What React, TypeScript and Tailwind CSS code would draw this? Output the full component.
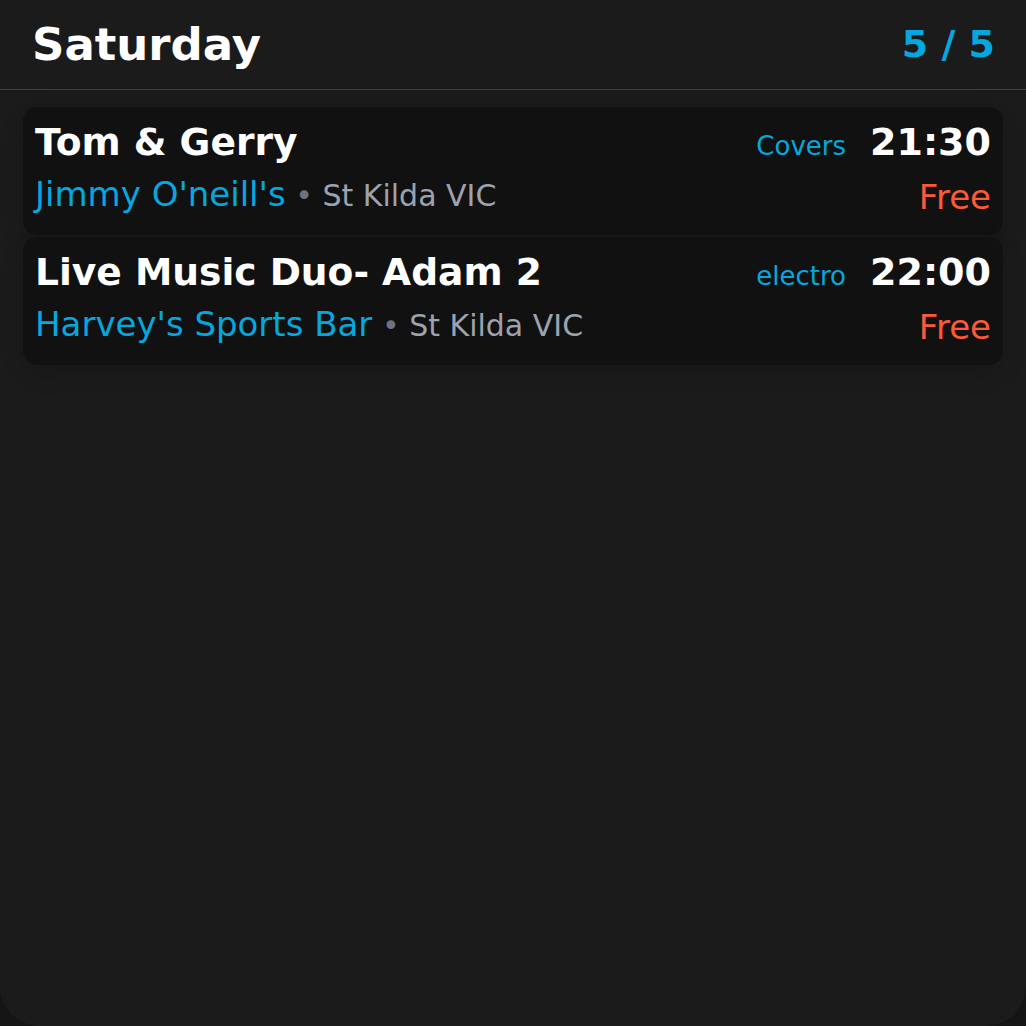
const gigs = [
  {
    title: "Tom & Gerry",
    genre: "Covers",
    time: "21:30",
    venue: "Jimmy O'neill's",
    place: "St Kilda VIC",
    price: "Free",
  },
  {
    title: "Live Music Duo- Adam 2",
    genre: "electro",
    time: "22:00",
    venue: "Harvey's Sports Bar",
    place: "St Kilda VIC",
    price: "Free",
  },
];

function GigCard({ gig }: { gig: (typeof gigs)[number] }) {
  return (
    <div className="flex h-[128px] justify-between rounded-[14px] bg-[#111111] px-3 pt-[13px] shadow-[0_10px_24px_rgba(0,0,0,0.12)]">
      <div className="flex min-w-0 flex-col">
        <h3 className="text-[37.6px] leading-[44px] font-bold text-white">
          {gig.title}
        </h3>
        <p className="mt-[10px] text-[34px] leading-[40px] whitespace-nowrap">
          <span className="text-[#04a8de]">{gig.venue}</span>
          <span className="text-[30px] text-[#6b7280]"> • </span>
          <span className="text-[30px] text-[#9ca3af]">{gig.place}</span>
        </p>
      </div>

      <div className="flex flex-col items-end">
        <div className="flex h-[44px] items-baseline gap-6">
          <span className="text-[26px] leading-none text-[#04a8de]">
            {gig.genre}
          </span>
          <span className="text-[38px] leading-[44px] font-bold text-white">
            {gig.time}
          </span>
        </div>
        <span className="mt-[16px] text-[34px] leading-none text-[#ff5a36]">
          {gig.price}
        </span>
      </div>
    </div>
  );
}

export default function App() {
  return (
    <div className="min-h-[1026px] bg-[#151515] font-['DejaVu_Sans',sans-serif]">
      <div className="flex min-h-[1026px] flex-col rounded-b-[40px] bg-[#1b1b1b]">
        <header className="flex h-[90px] items-center justify-between border-b border-[#374151] pr-[31px] pl-[32px]">
          <h1 className="text-[45px] font-bold text-white">Saturday</h1>
          <span className="text-[38px] font-bold text-[#04a8de]">5 / 5</span>
        </header>

        <div className="flex flex-col gap-[2px] px-[23px] pt-[17px]">
          {gigs.map((gig) => (
            <GigCard key={gig.time} gig={gig} />
          ))}
        </div>
      </div>
    </div>
  );
}
